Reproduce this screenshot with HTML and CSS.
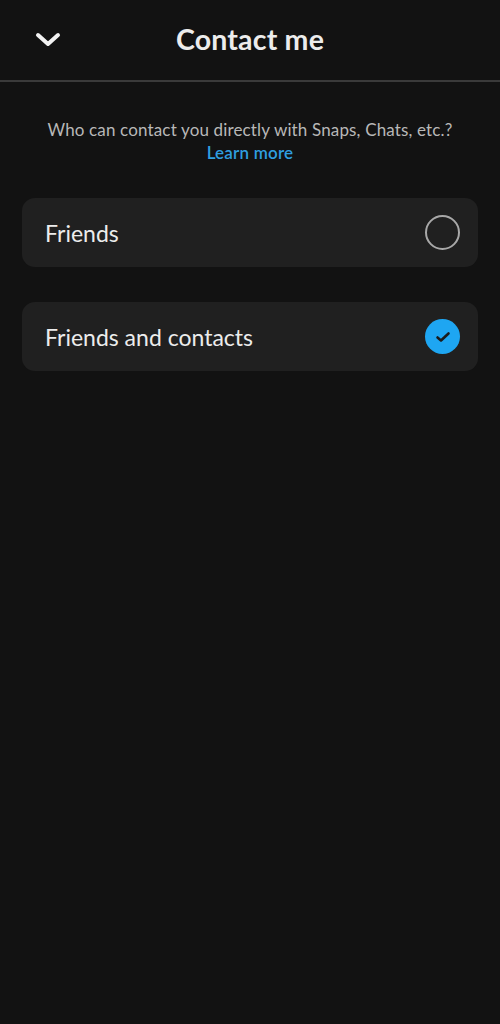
FILE: index.html
```html
<!DOCTYPE html>
<html>
<head>
<meta charset="utf-8">
<link rel="stylesheet" href="styles.css">
</head>
<body>
<div class="screen">
  <header class="topbar">
    <button class="back" aria-label="Back">
      <svg width="26" height="16" viewBox="0 0 26 16"><path d="M3 3 L13 12 L23 3" fill="none" stroke="#f2f2f2" stroke-width="4" stroke-linecap="round" stroke-linejoin="round"/></svg>
    </button>
    <h1 class="title">Contact me</h1>
  </header>
  <div class="intro">
    <p class="desc">Who can contact you directly with Snaps, Chats, etc.?</p>
    <a class="learn">Learn more</a>
  </div>
  <div class="options">
    <div class="option">
      <span class="label">Friends</span>
      <span class="radio"></span>
    </div>
    <div class="option">
      <span class="label">Friends and contacts</span>
      <span class="radio checked">
        <svg width="16" height="12" viewBox="0 0 16 12"><path d="M2.5 6.5 L6 9.5 L13.5 2.5" fill="none" stroke="#1b1b1b" stroke-width="2.6" stroke-linecap="round" stroke-linejoin="round"/></svg>
      </span>
    </div>
  </div>
</div>
</body>
</html>
```

FILE: styles.css
```css
html, body {
  margin: 0;
  padding: 0;
  background: #121212;
}
body {
  font-family: Lato, "Open Sans", sans-serif;
  color: #f0f0f0;
}
.screen {
  width: 500px;
  min-height: 1024px;
  background: #121212;
}
.topbar {
  height: 82px;
  border-bottom: 2px solid #3a3a3a;
  box-sizing: border-box;
  display: flex;
  align-items: center;
  justify-content: center;
  position: relative;
}
.back {
  position: absolute;
  left: 35px;
  top: 32px;
  background: none;
  border: 0;
  padding: 0;
  width: 26px;
  height: 20px;
  display: flex;
}
.title {
  margin: 0;
  font-size: 28.5px;
  font-weight: 700;
  color: #ececec;
  letter-spacing: 0.2px;
  margin-top: -3px;
}
.intro {
  padding-top: 37px;
  text-align: center;
  display: flex;
  flex-direction: column;
  align-items: center;
}
.desc {
  margin: 0;
  font-size: 17px;
  letter-spacing: 0.15px;
  color: #b8b8b8;
  line-height: 22px;
}
.learn {
  font-size: 17px;
  color: #2f9fe0;
  font-weight: 600;
  line-height: 24px;
  letter-spacing: 0.2px;
}
.options {
  padding: 0 22px 0 22px;
  margin-top: 33px;
  display: flex;
  flex-direction: column;
  gap: 35px;
}
.option {
  height: 69px;
  background: #202020;
  border-radius: 13px;
  display: flex;
  align-items: center;
  justify-content: space-between;
  padding: 0 18px 0 23px;
}
.label {
  font-size: 23px;
  color: #ececec;
}
.radio {
  width: 31px;
  height: 31px;
  border: 2px solid #a8a8a8;
  border-radius: 50%;
  display: flex;
  align-items: center;
  justify-content: center;
}
.radio.checked {
  width: 35px;
  height: 35px;
  border: 0;
  background: #1ea6f2;
}
```
